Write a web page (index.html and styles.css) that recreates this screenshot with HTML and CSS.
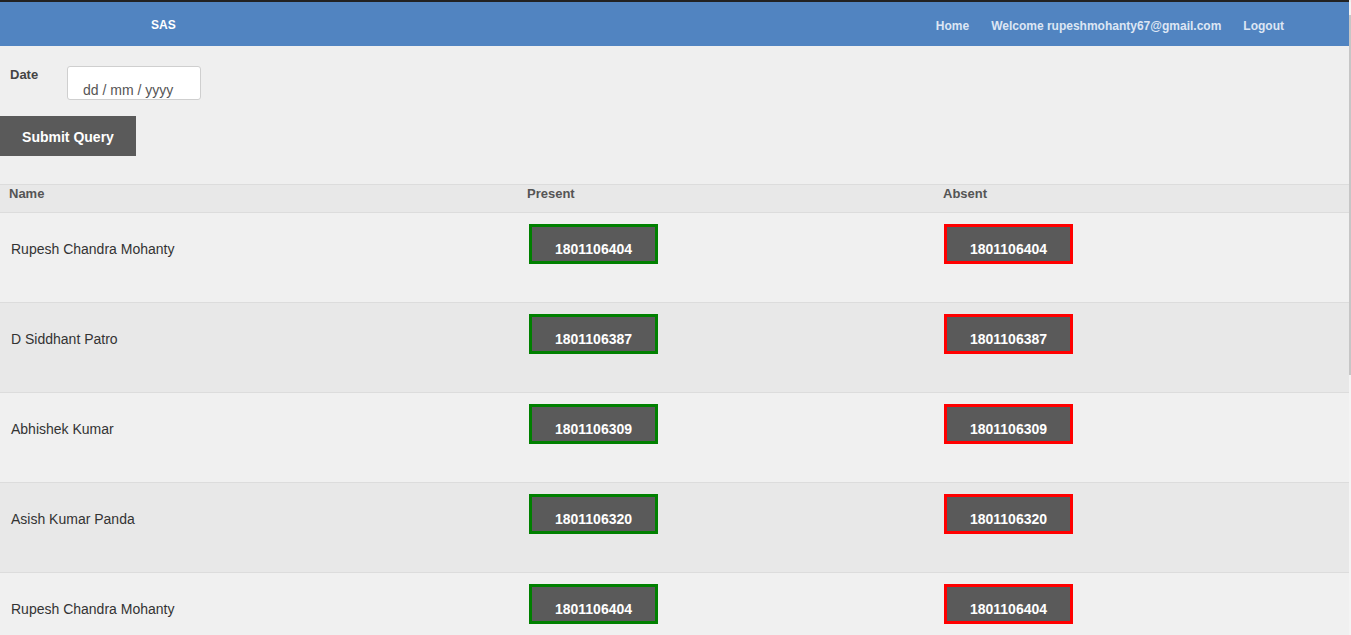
FILE: index.html
```html
<!DOCTYPE html>
<html lang="en">
<head>
<meta charset="utf-8">
<title>SAS</title>
<link rel="stylesheet" href="styles.css">
</head>
<body>
<header class="topbar">
  <div class="brand">SAS</div>
  <nav class="links">
    <a class="link" href="#">Home</a>
    <a class="link" href="#">Welcome rupeshmohanty67@gmail.com</a>
    <a class="link" href="#">Logout</a>
  </nav>
</header>

<form class="query">
  <div class="date-row">
    <label class="date-label" for="d">Date</label>
    <input class="date-input" id="d" type="text" placeholder="dd / mm / yyyy">
  </div>
  <button class="submit" type="button">Submit Query</button>
</form>

<div class="table">
  <div class="row head">
    <div class="cell">Name</div>
    <div class="cell">Present</div>
    <div class="cell">Absent</div>
  </div>
  <div class="row">
    <div class="cell name">Rupesh Chandra Mohanty</div>
    <div class="cell"><button class="roll present" type="button">1801106404</button></div>
    <div class="cell"><button class="roll absent" type="button">1801106404</button></div>
  </div>
  <div class="row alt">
    <div class="cell name">D Siddhant Patro</div>
    <div class="cell"><button class="roll present" type="button">1801106387</button></div>
    <div class="cell"><button class="roll absent" type="button">1801106387</button></div>
  </div>
  <div class="row">
    <div class="cell name">Abhishek Kumar</div>
    <div class="cell"><button class="roll present" type="button">1801106309</button></div>
    <div class="cell"><button class="roll absent" type="button">1801106309</button></div>
  </div>
  <div class="row alt">
    <div class="cell name">Asish Kumar Panda</div>
    <div class="cell"><button class="roll present" type="button">1801106320</button></div>
    <div class="cell"><button class="roll absent" type="button">1801106320</button></div>
  </div>
  <div class="row">
    <div class="cell name">Rupesh Chandra Mohanty</div>
    <div class="cell"><button class="roll present" type="button">1801106404</button></div>
    <div class="cell"><button class="roll absent" type="button">1801106404</button></div>
  </div>
</div>

<div class="scrollbar"><div class="thumb"></div></div>
</body>
</html>
```

FILE: styles.css
```css
html {
  overflow: hidden;
}
body {
  margin: 0;
  width: 1349px;
  background: #efefef;
  font-family: "Liberation Sans", Arial, sans-serif;
  color: #333;
  border-top: 2px solid #222;
}

.topbar {
  display: flex;
  align-items: center;
  justify-content: space-between;
  height: 44px;
  box-sizing: border-box;
  padding-top: 3px;
  background: #5184c1;
}
.brand {
  padding-left: 151px;
  padding-bottom: 2px;
  color: #fff;
  font-weight: bold;
  font-size: 12px;
}
.links {
  display: flex;
  padding-right: 54px;
}
.link {
  padding: 0 11px;
  color: #dde6f4;
  font-weight: bold;
  font-size: 12px;
  text-decoration: none;
}

.query {
  display: flex;
  flex-direction: column;
  align-items: flex-start;
  padding-top: 20px;
}
.date-row {
  display: flex;
  align-items: flex-start;
}
.date-label {
  width: 67px;
  padding-left: 10px;
  box-sizing: border-box;
  font-size: 13px;
  font-weight: bold;
  color: #444;
  line-height: 15px;
  padding-top: 1px;
}
.date-input {
  width: 134px;
  height: 34px;
  box-sizing: border-box;
  margin: 0;
  padding: 15px 4px 1px 15px;
  border: 1px solid #cfcfcf;
  border-radius: 3px;
  background: #fff;
  font-family: "Liberation Sans", Arial, sans-serif;
  font-size: 14px;
  line-height: 16px;
  color: #555;
}
.date-input::placeholder {
  color: #555;
  opacity: 1;
}
.submit {
  margin-top: 16px;
  width: 136px;
  height: 40px;
  border: 0;
  padding: 2px 0 0;
  background: #5a5a5a;
  color: #fff;
  font-family: "Liberation Sans", Arial, sans-serif;
  font-weight: bold;
  font-size: 14px;
}

.table {
  margin-top: 28px;
  border-top: 1px solid #dcdcdc;
}
.row {
  display: grid;
  grid-template-columns: 518px 416px 1fr;
  height: 89px;
  background: #f0f0f0;
  border-bottom: 1px solid #dcdcdc;
}
.row.alt {
  background: #e8e8e8;
}
.row.head {
  height: 27px;
  background: #e8e8e8;
}
.head .cell {
  padding: 1px 0 0 9px;
  font-size: 13px;
  font-weight: bold;
  color: #555;
  line-height: 15px;
}
.cell {
  padding: 11px 0 0 11px;
}
.cell.name {
  padding-top: 28px;
  font-size: 14px;
  line-height: 16px;
  color: #333;
}
.roll {
  width: 129px;
  height: 40px;
  box-sizing: border-box;
  padding: 10px 0 0;
  background: #5a5a5a;
  color: #fff;
  font-family: "Liberation Sans", Arial, sans-serif;
  font-weight: bold;
  font-size: 14px;
  line-height: 16px;
}
.roll.present {
  border: 3px solid #008000;
}
.roll.absent {
  border: 3px solid #ff0000;
  margin-left: -1px;
}

.scrollbar {
  position: fixed;
  top: 2px;
  right: 0;
  width: 2px;
  height: 633px;
  background: #f4f4f4;
}
.thumb {
  margin-top: 13px;
  height: 360px;
  background: #c6c6c6;
}
```
